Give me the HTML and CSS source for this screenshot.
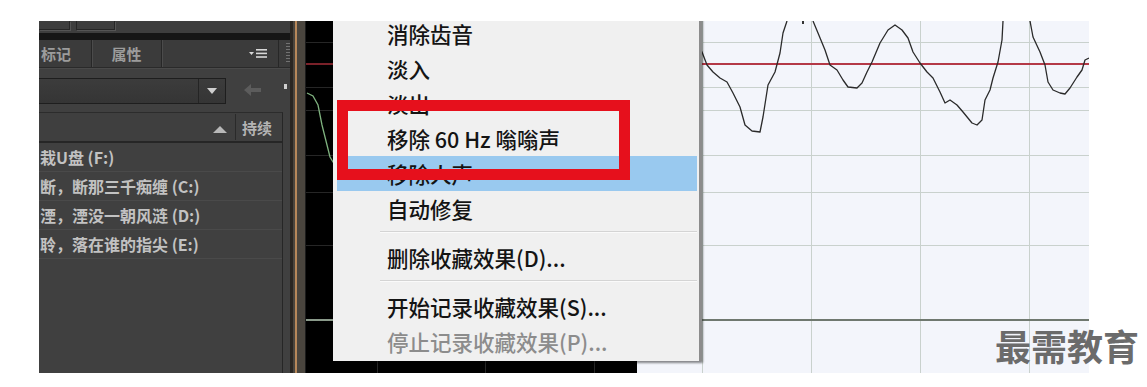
FILE: index.html
```html
<!DOCTYPE html>
<html lang="zh-CN">
<head>
  <meta charset="UTF-8" />
  <title>收藏效果</title>
  <link rel="stylesheet" href="styles.css">
</head>
<body>
  <div class="page">
    <div class="shot">
      <aside class="panel">
        <div class="strip">
          <span class="ghost-tab first"></span>
          <span class="ghost-tab"></span>
        </div>
        <div class="blackbar"></div>
        <div class="tabs">
          <div class="tab first"><span>标记</span></div>
          <div class="tab">属性</div>
          <div class="tab-rest">
            <svg class="menu-icon" width="19" height="9" viewBox="0 0 19 9">
              <polygon points="0,3 5,3 2.5,6" fill="#d8d8d8" />
              <rect x="7" y="0" width="11" height="1.6" fill="#d8d8d8" />
              <rect x="7" y="3.6" width="11" height="1.6" fill="#d8d8d8" />
              <rect x="7" y="7.2" width="11" height="1.6" fill="#d8d8d8" />
            </svg>
          </div>
          <div class="grip"></div>
        </div>
        <div class="tools">
          <div class="select">
            <span class="select-field"></span>
            <span class="select-btn">
              <svg width="10" height="6" viewBox="0 0 10 6"><polygon points="0,0 10,0 5,6" fill="#cfcfcf" /></svg>
            </span>
          </div>
          <svg class="back" width="17" height="12" viewBox="0 0 17 12">
            <polygon points="0,6 7,0 7,4 17,4 17,8 7,8 7,12" fill="#5c5c5c" />
          </svg>
          <span class="pip"></span>
        </div>
        <div class="list">
          <div class="list-head">
            <span class="sort">
              <svg width="14" height="7" viewBox="0 0 14 7"><polygon points="0,7 14,7 7,0" fill="#b8b8b8" /></svg>
            </span>
            <span class="col">持续</span>
          </div>
          <div class="row"><span>栽U盘 (F:)</span></div>
          <div class="row"><span>断，断那三千痴缠 (C:)</span></div>
          <div class="row"><span>湮，湮没一朝风涟 (D:)</span></div>
          <div class="row"><span>聆，落在谁的指尖 (E:)</span></div>
        </div>
      </aside>

      <div class="divider"><span class="rail"></span></div>

      <div class="display">
        <svg width="783" height="352" viewBox="0 0 783 352">
          <rect x="0" y="0" width="331" height="352" fill="#000" />
          <rect x="331" y="0" width="452" height="352" fill="#f3f5fb" />
          <g stroke="#262626" stroke-width="1">
            <line x1="71.5" y1="0" x2="71.5" y2="352" />
            <line x1="179.5" y1="0" x2="179.5" y2="352" />
            <line x1="288.5" y1="0" x2="288.5" y2="352" />
            <line x1="0" y1="21.5" x2="331" y2="21.5" />
            <line x1="0" y1="66.5" x2="331" y2="66.5" />
            <line x1="0" y1="89.5" x2="331" y2="89.5" />
            <line x1="0" y1="134.5" x2="331" y2="134.5" />
            <line x1="0" y1="171.5" x2="331" y2="171.5" />
            <line x1="0" y1="224.5" x2="331" y2="224.5" />
          </g>
          <g stroke="#c9d1cd" stroke-width="1">
            <line x1="396.5" y1="0" x2="396.5" y2="352" />
            <line x1="505.5" y1="0" x2="505.5" y2="352" />
            <line x1="614.5" y1="0" x2="614.5" y2="352" />
            <line x1="723.5" y1="0" x2="723.5" y2="352" />
            <line x1="331" y1="21.5" x2="783" y2="21.5" />
            <line x1="331" y1="66.5" x2="783" y2="66.5" />
            <line x1="331" y1="89.5" x2="783" y2="89.5" />
            <line x1="331" y1="134.5" x2="783" y2="134.5" />
            <line x1="331" y1="171.5" x2="783" y2="171.5" />
            <line x1="331" y1="224.5" x2="783" y2="224.5" />
          </g>
          <line x1="0" y1="43" x2="331" y2="43" stroke="#7a2129" stroke-width="2" />
          <line x1="331" y1="43" x2="783" y2="43" stroke="#b43947" stroke-width="2" />
          <line x1="0" y1="299" x2="331" y2="299" stroke="#8a9a8a" stroke-width="2" />
          <line x1="331" y1="299" x2="783" y2="299" stroke="#6f786f" stroke-width="2" />
          <polyline fill="none" stroke="#7fb27f" stroke-width="1.3"
            points="1,72 7,75 12,84 16,104 20,120 24,136 27,141 40,160" />
          <g fill="none" stroke="#2a2a2a" stroke-width="1.3" stroke-linejoin="round">
            <polyline points="390,20 396,31 401,44 407,51 414,57 421,61 427,72 434,86 439,104 446,110 454,111 457,96 462,64 469,51 474,32 477,12 481,0" />
            <polyline points="507,0 512,12 519,29 524,44 531,49 537,59 542,66 551,67 556,62 561,51 566,41 574,22 582,9 589,4 596,9 602,17 607,31 614,42 621,51 627,57 634,71 639,82 644,79 651,84 657,91 666,102 671,104 676,99 679,79 684,69 687,57 692,41 696,19 697,0" />
            <polyline points="724,0 727,16 734,31 739,44 742,61 747,69 754,72 759,73 764,67 771,56 776,49 779,39 783,37" />
          </g>
          <rect x="496" y="0" width="2" height="3" fill="#333" />
        </svg>
      </div>

      <div class="menu">
        <div class="item">消除齿音</div>
        <div class="item">淡入</div>
        <div class="item">淡出</div>
        <div class="item">移除 60 Hz 嗡嗡声</div>
        <div class="item active">移除人声</div>
        <div class="item">自动修复</div>
        <div class="sep"></div>
        <div class="item">删除收藏效果(D)...</div>
        <div class="sep"></div>
        <div class="item">开始记录收藏效果(S)...</div>
        <div class="item disabled">停止记录收藏效果(P)...</div>
      </div>

      <div class="mark"></div>
    </div>
    <div class="watermark">最需教育</div>
  </div>
</body>
</html>
```

FILE: styles.css
```css
body {
  margin: 0;
  background: #fff;
  font-family: "Noto Sans CJK SC", "Noto Sans", sans-serif;
}
.page {
  position: relative;
  width: 1147px;
  height: 387px;
  overflow: hidden;
}
.shot {
  position: relative;
  display: flex;
  margin: 21px 0 0 39px;
  width: 1050px;
  height: 352px;
  overflow: hidden;
}

/* left panel */
.panel {
  width: 251px;
  flex-shrink: 0;
  display: flex;
  flex-direction: column;
  background: #404040;
  color: #c2c2c2;
  font-size: 16px;
}
.strip {
  height: 12px;
  background: #3e3e3e;
  display: flex;
  gap: 6px;
}
.ghost-tab {
  width: 37px;
  height: 8px;
  border: 1px solid #262626;
  border-top: none;
  box-shadow: 1px 1px 0 #555;
}
.ghost-tab.first {
  width: 30px;
  border-left: none;
}
.blackbar {
  height: 7px;
  background: #161616;
}
.tabs {
  height: 27px;
  display: flex;
  background: #3b3b3b;
  border-bottom: 1px solid #2a2a2a;
  box-shadow: 0 1px 0 #4a4a4a;
}
.tab {
  width: 70px;
  display: flex;
  align-items: center;
  justify-content: center;
  color: #9c9c9c;
  border-right: 1px solid #272727;
  box-shadow: 1px 0 0 #4b4b4b;
  font-weight: 700;
  font-size: 15px;
}
.tab.first {
  width: 53px;
  justify-content: flex-start;
}
.tab.first span {
  margin-left: 2px;
  white-space: nowrap;
}
.tab-rest {
  width: 108px;
  display: flex;
  align-items: center;
  justify-content: flex-end;
  padding-right: 10px;
  border-right: 1px solid #272727;
}
.grip {
  width: 4px;
  margin: 3px 0 0 7px;
  height: 20px;
  background: repeating-linear-gradient(#8a8a8a 0 1px, transparent 1px 3px);
  opacity: 0.7;
}
.tools {
  height: 44px;
  display: flex;
  align-items: center;
}
.select {
  width: 186px;
  height: 24px;
  margin-top: 2px;
  display: flex;
  border: 1px solid #1e1e1e;
  border-left: none;
  background: linear-gradient(#3c3c3c, #353535);
}
.select-field {
  flex: 1;
}
.select-btn {
  width: 26px;
  display: flex;
  align-items: center;
  justify-content: center;
  border-left: 1px solid #242424;
}
.back {
  margin: 0 0 0 18px;
}
.pip {
  width: 3px;
  height: 5px;
  margin: -8px 0 0 23px;
  background: #d0d0d0;
}
.list {
  flex: 1;
  width: 243px;
  border-right: 1px solid #262626;
  border-top: 1px solid #2c2c2c;
}
.list-head {
  height: 28px;
  display: flex;
  justify-content: flex-end;
  align-items: center;
  background: #3f3f3f;
  border-bottom: 2px solid #262626;
}
.sort {
  display: flex;
  padding: 4px 8px 0 0;
  border-right: 1px solid #2a2a2a;
  height: 22px;
  align-items: center;
}
.col {
  width: 40px;
  padding-left: 6px;
  color: #b4b4b4;
  font-weight: 700;
  font-size: 15px;
}
.row {
  height: 28px;
  display: flex;
  align-items: center;
  white-space: nowrap;
  border-bottom: 1px solid #4a4a4a;
  font-weight: 700;
}
.row span {
  margin-left: 1px;
}

/* splitter */
.divider {
  width: 16px;
  flex-shrink: 0;
  display: flex;
  background: #4a453e;
  border-left: 3px solid #2a2622;
  border-right: 1px solid #1c1c1c;
  box-sizing: border-box;
}
.rail {
  width: 2px;
  margin-left: 2px;
  background: #b8885a;
}

.display {
  width: 783px;
  flex-shrink: 0;
}
.display svg {
  display: block;
}

/* context menu */
.menu {
  position: absolute;
  left: 294px;
  top: -5px;
  width: 366px;
  padding-bottom: 2px;
  background: #f0f0f0;
  border-right: 3px solid #8c8c8c;
  box-shadow: 1px 2px 2px rgba(0, 0, 0, 0.45);
  font-size: 21.5px;
  font-weight: 500;
  color: #141414;
}
.item {
  height: 35px;
  line-height: 35px;
  margin: 0 2px 0 4px;
  padding-left: 50px;
  white-space: nowrap;
}
.item.active {
  background: #99c9ef;
}
.item.disabled {
  color: #8c8c8c;
}
.sep {
  height: 1px;
  margin: 5px 2px 8px 47px;
  background: #d4d4d4;
  box-shadow: 0 1px 0 #fafafa;
}

/* highlight frame */
.mark {
  position: absolute;
  left: 298px;
  top: 79px;
  width: 293px;
  height: 80px;
  box-sizing: border-box;
  border: 11px solid #e6101c;
}

.watermark {
  position: absolute;
  left: 995px;
  top: 327px;
  font-size: 36px;
  line-height: 1;
  font-weight: 700;
  color: #6b6b6b;
  white-space: nowrap;
}
```
